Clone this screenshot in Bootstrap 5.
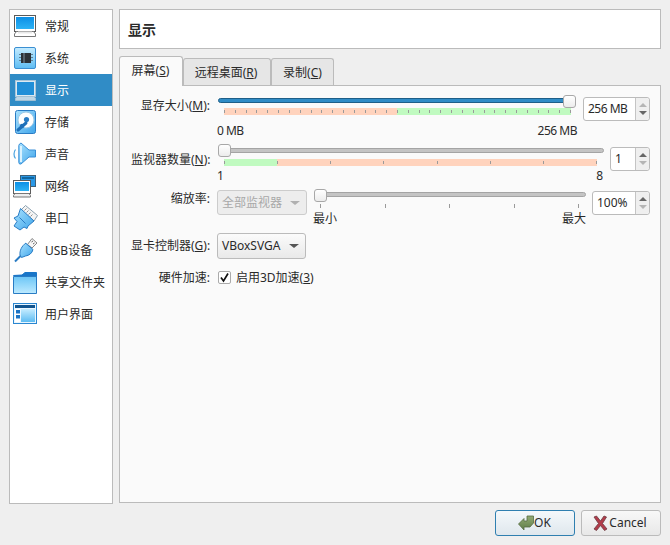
<!DOCTYPE html>
<html lang="zh">
<head>
<meta charset="utf-8">
<title>显示</title>
<link rel="stylesheet" href="https://cdn.jsdelivr.net/npm/bootstrap@5.3.0/dist/css/bootstrap.min.css">
<style>
html,body{margin:0;width:670px;height:545px;overflow:hidden;background:#efefef}
body{font-family:"Noto Sans","Noto Sans CJK SC",sans-serif;font-size:12px;line-height:16px;color:#2a2a2a}
.vb-win{width:670px;height:545px;padding:9px}
.vb-main{height:495px;gap:6px}
.vb-side{width:104px;height:495px;background:#fff;border:1px solid #bbb;padding:0;border-radius:0;flex:none}
.vb-side .list-group-item{height:32px;padding:0 0 0 2px;border:0;margin:0;background:transparent;color:#2a2a2a;display:flex;align-items:center;gap:5px;font-size:12px;border-radius:0;white-space:nowrap}
.vb-side .list-group-item.active{background:#308cc6;color:#fff;margin-top:0}
.vb-side .vb-txt{padding-top:1px}
.vb-ico{width:28px;height:28px;flex:none;display:block}
.vb-right{width:542px}
.vb-head{height:40px;background:#fff;border:1px solid #bbb;padding:2px 0 0 8px;font-size:14px;font-weight:700;margin-bottom:7px}
.vb-tabs{border:0;height:29px;padding-left:0;gap:0;align-items:flex-end;flex-wrap:nowrap}
.vb-tabs .nav-link{height:27px;padding:0 2px 0 0;text-align:center;font-size:12px;line-height:27px;color:#2a2a2a;background:#e6e6e6;border:1px solid #bbb;border-bottom:0;border-radius:3px 3px 0 0;margin:0}
.vb-tabs .nav-link.active{height:30px;background:#fafafa;color:#2a2a2a;border-color:#bbb;line-height:28px;position:relative;top:1px;z-index:2;padding-right:1px}
.vb-tabs .nav-link.vb-t3{padding-right:0}
.vb-t1{width:64px}.vb-t2{width:88px}.vb-t3{width:63px}
.vb-pane{height:418px;background:#fafafa;border:1px solid #bbb;padding:11px 10px 0 11px}
.vb-row{display:flex;align-items:flex-start}
.vb-lab{width:79px;flex:none;text-align:right;white-space:nowrap;margin-right:7px}
.vb-r1{height:49px}.vb-r2{height:44px}.vb-r3{height:43px}.vb-r4{height:37px}
.vb-r1 .vb-lab{padding-top:1px}
.vb-r2 .vb-lab{padding-top:6px}
.vb-r3 .vb-lab{padding-top:1px}
.vb-r4 .vb-lab{padding-top:5px}
.vb-mid{position:relative;flex:none}
.vb-track{height:5px;background:#c4c4c4;border:1px solid #a4a4a4;border-radius:3px}
.vb-track.vb-full{background:#308cc6;border-color:#1f5f88}
.vb-knob{position:absolute;width:13px;height:13px;background:linear-gradient(#fff,#ececec);border:1px solid #a8a8a8;border-radius:3px}
.vb-bar{height:7px;margin-top:5px;position:relative}
.vb-tick{position:absolute;top:2px;width:1px;height:3px;background:#9a9a9a}
.vb-b3 .vb-tick{top:1px;height:4px}
.vb-scale{display:flex;justify-content:space-between}
.vb-scale2{margin-top:2px;padding-right:1px}
.vb-num{letter-spacing:-.5px}
.vb-spin{height:24px;background:#fff;border:1px solid #bbb;border-radius:3px;display:flex;flex:none;align-items:stretch;padding:0}
.vb-spin span{flex:1;padding-left:4px;line-height:22px;white-space:nowrap}
.vb-arrows{width:14px;flex:none;background:#efefef;border-left:1px solid #c4c4c4;display:flex;flex-direction:column;align-items:center;justify-content:center;gap:4px;border-radius:0 3px 3px 0}
.vb-up,.vb-dn{width:0;height:0;border-left:4px solid transparent;border-right:4px solid transparent}
.vb-up{border-bottom:4px solid #666}.vb-dn{border-top:4px solid #666}
.vb-up.off{border-bottom-color:#b5b5b5}.vb-dn.off{border-top-color:#b5b5b5}
.vb-combo{height:25px;border:1px solid #bbb;border-radius:3px;background:linear-gradient(#fbfbfb,#e9e9e9);display:flex;align-items:center;justify-content:space-between;padding:0 6px 0 4px;flex:none;white-space:nowrap;color:#2a2a2a;font-size:12px}
.vb-combo.off{color:#a8a8a8;background:#ededed;border-color:#ccc}
.vb-caret{width:0;height:0;border-left:5px solid transparent;border-right:5px solid transparent;border-top:4px solid #555}
.off .vb-caret{border-top-color:#b0b0b0}
.vb-check{width:13px;height:13px;flex:none;margin:1px 0 0 1px;background:#fff;border:1px solid #aaa;border-radius:2px;display:block}
.vb-cktxt{margin-left:5px;white-space:nowrap}
.vb-foot{margin-top:6px;gap:6px;justify-content:flex-end}
.vb-btn{width:80px;height:26px;padding:0 2px 0 0;font-size:12px;line-height:16px;color:#2a2a2a;border:1px solid #bbb;border-radius:3px;background:linear-gradient(#f8f8f8,#e8e8e8);display:flex;align-items:center;justify-content:center;gap:0}
.vb-btn.vb-def{border-color:#2f7fb0;background:linear-gradient(#f4f8fb,#dfe7ed);padding-right:1px}
.vb-btn svg{width:16px;height:16px;flex:none}
.vb-defs{width:0;height:0;display:block}
u{text-underline-offset:1px}
</style>
</head>
<body>
<svg class="vb-defs" aria-hidden="true">
<defs>
<linearGradient id="gScreen" x1="0" y1="0" x2="0" y2="1"><stop offset="0" stop-color="#0c8fe6"/><stop offset="1" stop-color="#2db3f5"/></linearGradient>
<linearGradient id="gSky" x1="0" y1="0" x2="0" y2="1"><stop offset="0" stop-color="#c5ecff"/><stop offset="1" stop-color="#5dbcf2"/></linearGradient>
<linearGradient id="gSky2" x1="0" y1="0" x2="1" y2="1"><stop offset="0" stop-color="#a9e2ff"/><stop offset="1" stop-color="#3fa5ea"/></linearGradient>
<linearGradient id="gFold" x1="0" y1="0" x2="0" y2="1"><stop offset="0" stop-color="#6cc6f6"/><stop offset="1" stop-color="#bdeaff"/></linearGradient>
<linearGradient id="gOlive" x1="0" y1="0" x2="0" y2="1"><stop offset="0" stop-color="#92aa74"/><stop offset="1" stop-color="#5f7d48"/></linearGradient>
</defs>
</svg>
<div class="vb-win">
  <div class="d-flex vb-main">
    <div class="list-group vb-side">
      <div class="list-group-item"><svg class="vb-ico" viewBox="0 0 28 28"><rect x="2.500" y="3.500" width="21" height="16" fill="#fff" stroke="#5a5a5a"/><rect x="4" y="5" width="18" height="12" fill="url(#gScreen)"/><path d="M4.500 19.500 2.500 22v2.500h21V22l-2-2.500z" fill="#fff" stroke="#777"/><path d="M6 19.500h14v2H6z" fill="#e8e8e8"/></svg><span class="vb-txt">常规</span></div>
      <div class="list-group-item"><svg class="vb-ico" viewBox="0 0 28 28"><rect x="2.500" y="3.500" width="21" height="21" rx="1.500" fill="url(#gSky)" stroke="#3b8fd2"/><path d="M7 10h2v1H7zm0 3h2v1H7zm0 3h2v1H7zm12-6h2v1h-2zm0 3h2v1h-2zm0 3h2v1h-2z" fill="#5f7f95"/><rect x="9" y="9" width="10" height="10" fill="#2c3238"/><rect x="11" y="9" width="2" height="10" fill="#55606a"/></svg><span class="vb-txt">系统</span></div>
      <div class="list-group-item active"><svg class="vb-ico" viewBox="0 0 28 28"><rect x="3.500" y="4.500" width="20" height="16" fill="#d9e9f3" stroke="#a9c6d9"/><rect x="5" y="6" width="17" height="13" fill="#1f8fd8"/><path d="M5.500 20.500 3.500 22v2.500h20V22l-2-1.500z" fill="#bcd6e6" stroke="#a0c0d4"/></svg><span class="vb-txt">显示</span></div>
      <div class="list-group-item"><svg class="vb-ico" viewBox="0 0 28 28"><rect x="3.500" y="2.500" width="20" height="23" rx="2" fill="url(#gSky2)" stroke="#2a7cc4"/><circle cx="14" cy="12" r="8" fill="#fff" stroke="#9fc8e4"/><circle cx="14.500" cy="11.500" r="2.600" fill="#2a7cc4"/><path d="M6 22 14 15" stroke="#1d6fb8" stroke-width="3" stroke-linecap="round"/><circle cx="10" cy="18" r="2.200" fill="#1d6fb8"/></svg><span class="vb-txt">存储</span></div>
      <div class="list-group-item"><svg class="vb-ico" viewBox="0 0 28 28"><path d="M3.500 9.500C1.500 12 1.500 16 3.500 18.500" fill="none" stroke="#4aa3e0" stroke-width="1.200"/><path d="M7.500 4 6.800 5.500v17l.7 1.500H9l8-7h6.500V10H17L9 3z" fill="url(#gSky2)" stroke="#3a8fd6"/><path d="M9 6v16" stroke="#d9f2ff" stroke-width="2"/></svg><span class="vb-txt">声音</span></div>
      <div class="list-group-item"><svg class="vb-ico" viewBox="0 0 28 28"><rect x="8.500" y="3.500" width="15" height="11" fill="#2a98e6" stroke="#3d5f78"/><path d="M10 5h12v2H10z" fill="#11669f"/><rect x="1.500" y="8.500" width="17" height="13" fill="#fff" stroke="#5a5a5a"/><rect x="3" y="10" width="14" height="9" fill="url(#gScreen)"/><path d="M3 21.500 1.500 23.500v1.500h17v-1.500l-1.500-2z" fill="#eee" stroke="#777"/></svg><span class="vb-txt">网络</span></div>
      <div class="list-group-item"><svg class="vb-ico" viewBox="0 0 28 28"><path d="M9 6 13.500 1.500l12 10-3.500 5.500z" fill="#f4f4f4" stroke="#8aa0b0"/><path d="M12.500 6.500l2-2m0 4 2-2m0 4 2-2m0 4 2-2" stroke="#777" stroke-width=".8"/><path d="M8.500 4.500 22 17l-6 5-1 2.500-3-1.500-4 3L2 22l3-4.500-3-3.500 4-2z" fill="url(#gSky2)" stroke="#2a7cc4"/><path d="M7.500 13.500 13.500 19.500" stroke="#2a7cc4"/></svg><span class="vb-txt">串口</span></div>
      <div class="list-group-item"><svg class="vb-ico" viewBox="0 0 28 28"><path d="M15.500 8.500 20 2.500l5 4.500-5 5z" fill="#f6f6f6" stroke="#888"/><path d="M19.500 6l1.500-1m0 3 1.500-1" stroke="#666"/><path d="M14 7.500 21 13.500c-1 4-4 6-7.500 6.500l-4 1.500-1.500-2.500c-.5-4 1.500-9 6-12z" fill="url(#gSky2)" stroke="#2a7cc4"/><path d="M8.500 20 3 25.500" stroke="#2a7cc4" stroke-width="2"/></svg><span class="vb-txt">USB设备</span></div>
      <div class="list-group-item"><svg class="vb-ico" viewBox="0 0 28 28"><path d="M1.500 7.500 10 7l3-2.500H24.500V9z" fill="#1976c8" stroke="#1976c8"/><path d="M1.500 8.500H24.500V25.500H1.500z" fill="url(#gFold)" stroke="#2a7cc4"/></svg><span class="vb-txt">共享文件夹</span></div>
      <div class="list-group-item"><svg class="vb-ico" viewBox="0 0 28 28"><rect x="1.500" y="3.500" width="23" height="20" fill="#e8f6ff" stroke="#2a86d0"/><rect x="3" y="5" width="20" height="3" fill="#11548f"/><rect x="3" y="9" width="5" height="13" fill="#fff"/><rect x="4" y="10" width="4" height="3.500" fill="#1a73c4"/><rect x="4" y="15" width="4" height="3.500" fill="#1a73c4"/><rect x="9" y="9" width="14" height="13" fill="url(#gSky)"/></svg><span class="vb-txt">用户界面</span></div>
    </div>
    <div class="vb-right">
      <div class="vb-head d-flex align-items-center">显示</div>
      <ul class="nav nav-tabs vb-tabs">
        <li class="nav-item"><a class="nav-link active vb-t1" href="#">屏幕(<u>S</u>)</a></li>
        <li class="nav-item"><a class="nav-link vb-t2" href="#">远程桌面(<u>R</u>)</a></li>
        <li class="nav-item"><a class="nav-link vb-t3" href="#">录制(<u>C</u>)</a></li>
      </ul>
      <div class="vb-pane">
        <div class="vb-row vb-r1">
          <div class="vb-lab">显存大小(<u>M</u>):</div>
          <div class="vb-mid" style="width:360px">
            <div class="vb-track vb-full" style="margin:1px 1px 0 1px"></div>
            <div class="vb-knob" style="left:346px;top:-2px"></div>
            <div class="vb-bar" id="b1" style="margin-left:7px;width:347px"></div>
            <div class="vb-scale vb-num" style="margin-top:8px"><span>0 MB</span><span>256 MB</span></div>
          </div>
          <div class="vb-spin ms-auto" style="width:67px"><span class="vb-num">256 MB</span><div class="vb-arrows"><i class="vb-up off"></i><i class="vb-dn"></i></div></div>
        </div>
        <div class="vb-row vb-r2">
          <div class="vb-lab">监视器数量(<u>N</u>):</div>
          <div class="vb-mid" style="width:387px">
            <div class="vb-track" style="margin:2px 0 0 1px"></div>
            <div class="vb-knob" style="left:1px;top:-2px"></div>
            <div class="vb-bar" id="b2" style="margin-left:7px;width:373px;margin-top:6px"></div>
            <div class="vb-scale vb-scale2"><span>1</span><span>8</span></div>
          </div>
          <div class="vb-spin ms-auto" style="width:40px;margin-top:1px"><span>1</span><div class="vb-arrows"><i class="vb-up"></i><i class="vb-dn off"></i></div></div>
        </div>
        <div class="vb-row vb-r3">
          <div class="vb-lab">缩放率:</div>
          <div class="vb-combo off" style="width:90px"><span>全部监视器</span><i class="vb-caret"></i></div>
          <div class="vb-mid" style="width:272px;margin-left:7px">
            <div class="vb-track" style="margin-top:2px"></div>
            <div class="vb-knob" style="left:0;top:-1px"></div>
            <div class="vb-bar vb-b3" id="b3" style="margin:6px 0 0 6px;width:260px;height:5px"></div>
            <div class="vb-scale" style="margin:3px 0 0 -1px"><span>最小</span><span>最大</span></div>
          </div>
          <div class="vb-spin ms-auto" style="width:58px;margin-top:1px"><span>100%</span><div class="vb-arrows"><i class="vb-up"></i><i class="vb-dn off"></i></div></div>
        </div>
        <div class="vb-row vb-r4">
          <div class="vb-lab">显卡控制器(<u>G</u>):</div>
          <div class="vb-combo" style="width:89px;height:26px"><span>VBoxSVGA</span><i class="vb-caret"></i></div>
        </div>
        <div class="vb-row">
          <div class="vb-lab">硬件加速:</div>
          <svg class="vb-check" viewBox="0 0 11 11"><path d="M2 5.500 4.500 9 9 1.500" fill="none" stroke="#111" stroke-width="1.700"/></svg>
          <span class="vb-cktxt">启用3D加速(<u>3</u>)</span>
        </div>
      </div>
    </div>
  </div>
  <div class="d-flex vb-foot">
    <button type="button" class="btn vb-btn vb-def"><svg viewBox="0 0 16 16"><path d="M.5 9 6 3.500V6h3V1h6.500v7l-3.500 4H6v3z" fill="url(#gOlive)" stroke="#556b42" stroke-width=".8"/></svg>OK</button>
    <button type="button" class="btn vb-btn"><svg viewBox="0 0 16 16"><path d="M1 2 3.500 1 7.500 6l3.500-5 2.500 1-4 6.500 4.500 5.500-2.500 1.500-4-5-4 5L1 14l4.500-5.500z" fill="#b23c4a" stroke="#6b3a40" stroke-width=".8"/></svg>Cancel</button>
  </div>
</div>
<script>
function ticks(id,n,w,bg){var b=document.getElementById(id),h='';for(var i=0;i<=n;i++){h+='<i class="vb-tick" style="left:'+Math.round(i*w/n)+'px"></i>'}b.innerHTML=h;b.style.background=bg}
ticks('b1',32,346,'linear-gradient(90deg,#ffd3bd 0,#ffd3bd 173px,#c0fac0 173px,#c0fac0 100%)');
ticks('b2',7,372,'linear-gradient(90deg,#c0fac0 0,#c0fac0 53px,#ffd3bd 53px,#ffd3bd 100%)');
ticks('b3',4,258,'none');
</script>
</body>
</html>
